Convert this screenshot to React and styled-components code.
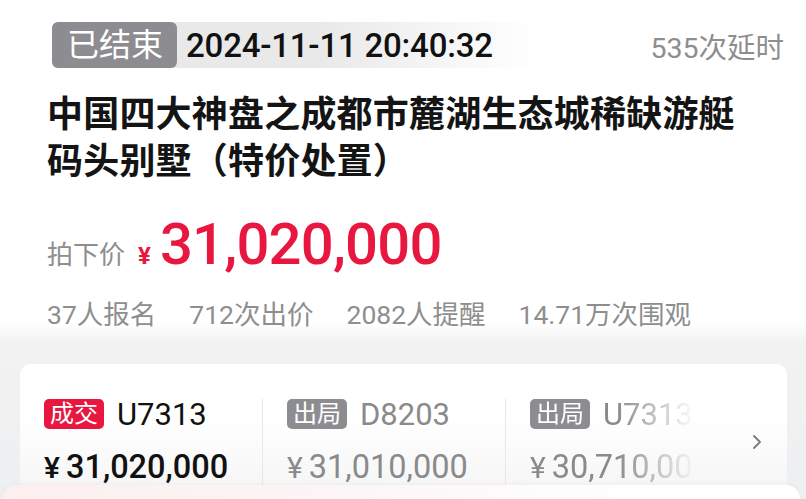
import React from 'react';
import styled, { createGlobalStyle } from 'styled-components';
import { ChevronRight } from 'lucide-react';

const GlobalStyle = createGlobalStyle`
  html, body {
    margin: 0;
    padding: 0;
  }

  body {
    width: 806px;
    height: 499px;
    overflow: hidden;
    background: #eeeff0;
    font-family: Roboto, 'Liberation Sans', 'Noto Sans CJK SC', sans-serif;
    color: #141414;
  }
`;

const records = [
  { id: 1, tag: '成交', code: 'U7313', price: '31,020,000', won: true },
  { id: 2, tag: '出局', code: 'D8203', price: '31,010,000', won: false },
  { id: 3, tag: '出局', code: 'U7313', price: '30,710,000', won: false },
];

const stats = ['37人报名', '712次出价', '2082人提醒', '14.71万次围观'];

const App = () => (
  <Page>
    <GlobalStyle />
    <Header>
      <StatusRow>
        <StatusPill>
          <EndedBadge>已结束</EndedBadge>
          <EndTime>2024-11-11 20:40:32</EndTime>
        </StatusPill>
        <Delay>535次延时</Delay>
      </StatusRow>

      <Title>中国四大神盘之成都市麓湖生态城稀缺游艇码头别墅（特价处置）</Title>

      <PriceRow>
        <PriceLabel>拍下价</PriceLabel>
        <Yen>¥</Yen>
        <BigPrice>31,020,000</BigPrice>
      </PriceRow>

      <Stats>
        {stats.map((s) => (
          <span key={s}>{s}</span>
        ))}
      </Stats>
    </Header>

    <BidCard>
      {records.map((r, i) => (
        <BidColumn key={r.id} $fade={i === records.length - 1}>
          <BidTop>
            <Tag $won={r.won}>{r.tag}</Tag>
            <Bidder $won={r.won}>{r.code}</Bidder>
          </BidTop>
          <BidPrice $won={r.won}>
            <small>¥</small>
            {r.price}
          </BidPrice>
        </BidColumn>
      ))}
      <More>
        <ChevronRight size={24} strokeWidth={1.8} color="#7a7a7a" />
      </More>
    </BidCard>

    <Sheet />
  </Page>
);

const Page = styled.div`
  display: flex;
  flex-direction: column;
  min-height: 499px;
  background: linear-gradient(#ffffff 0, #ffffff 322px, #f2f2f3 342px, #eeeff0 100%);
`;

const Header = styled.div`
  padding: 22px 22px 0 47px;
`;

const StatusRow = styled.div`
  display: flex;
  align-items: center;
  justify-content: space-between;
  margin-left: 5px;
  height: 46px;
`;

const StatusPill = styled.div`
  display: flex;
  align-items: center;
  width: 483px;
  height: 46px;
  border-radius: 6px;
  background: linear-gradient(to right, #e9e9e9 55%, rgba(236, 236, 236, 0) 100%);
`;

const EndedBadge = styled.span`
  display: flex;
  align-items: center;
  height: 46px;
  padding: 0 14px 0 15px;
  border-radius: 6px;
  background: #8d8d91;
  color: #ffffff;
  font-size: 32px;
  line-height: 1;
`;

const EndTime = styled.span`
  margin-left: 9px;
  font-size: 33px;
  font-weight: 500;
  color: #111111;
  letter-spacing: -0.2px;
`;

const Delay = styled.span`
  font-size: 28.5px;
  color: #8e8e8e;
`;

const Title = styled.h1`
  margin: 24px 0 0;
  max-width: 700px;
  font-size: 36px;
  line-height: 47px;
  font-weight: 700;
  letter-spacing: 0.2px;
  color: #141414;
`;

const PriceRow = styled.div`
  display: flex;
  align-items: baseline;
  margin-top: 24px;
  height: 62px;
`;

const PriceLabel = styled.span`
  font-size: 26px;
  color: #8e8e8e;
`;

const Yen = styled.span`
  margin: 0 9px 0 13px;
  font-size: 24px;
  font-weight: 700;
  color: #e8173f;
`;

const BigPrice = styled.span`
  font-size: 58px;
  font-weight: 500;
  letter-spacing: -0.8px;
  color: #e8173f;
`;

const Stats = styled.div`
  display: flex;
  gap: 33px;
  margin-top: 25px;
  font-size: 26.5px;
  line-height: 36px;
  color: #8e8e8e;
`;

const BidCard = styled.div`
  display: flex;
  margin: 31px 19px 0 20px;
  height: 121px;
  padding-top: 35px;
  box-sizing: border-box;
  overflow: hidden;
  border-radius: 11px 11px 0 0;
  background: linear-gradient(#ffffff 45%, #f6f6f6 100%);
`;

const BidColumn = styled.div`
  box-sizing: border-box;
  padding-left: 24px;
  height: 100px;
  ${(p) =>
    p.$fade
      ? `
    flex: 1;
    -webkit-mask-image: linear-gradient(to right, #000 50%, transparent 86%);
    mask-image: linear-gradient(to right, #000 50%, transparent 86%);
    white-space: nowrap;
    overflow: hidden;
  `
      : `
    width: 243px;
    flex-shrink: 0;
    border-right: 1px solid #e7e7e7;
  `}
`;

const BidTop = styled.div`
  display: flex;
  align-items: center;
  gap: 13px;
  height: 30px;
`;

const Tag = styled.span`
  display: flex;
  align-items: center;
  height: 30px;
  padding: 0 6px;
  border-radius: 5px;
  background: ${(p) => (p.$won ? '#e8173f' : '#8d8d91')};
  color: #ffffff;
  font-size: 24px;
  line-height: 1;
`;

const Bidder = styled.span`
  font-size: 31px;
  color: ${(p) => (p.$won ? '#111111' : '#8a8a8a')};
`;

const BidPrice = styled.div`
  margin-top: 20px;
  font-size: 32.5px;
  line-height: 36px;
  font-weight: ${(p) => (p.$won ? 500 : 400)};
  color: ${(p) => (p.$won ? '#111111' : '#8a8a8a')};

  small {
    font-size: 30px;
    margin-right: 6px;
  }
`;

const More = styled.div`
  display: flex;
  align-items: center;
  justify-content: center;
  width: 60px;
  height: 86px;
  flex-shrink: 0;
`;

const Sheet = styled.div`
  flex: 1;
  margin: 0 6px 0 2px;
  border-radius: 14px 14px 0 0;
  background: linear-gradient(to right, #fcefef 0%, #fdf6f6 45%, #ffffff 80%);
  box-shadow: 0 -1px 4px rgba(0, 0, 0, 0.04);
`;

export default App;
